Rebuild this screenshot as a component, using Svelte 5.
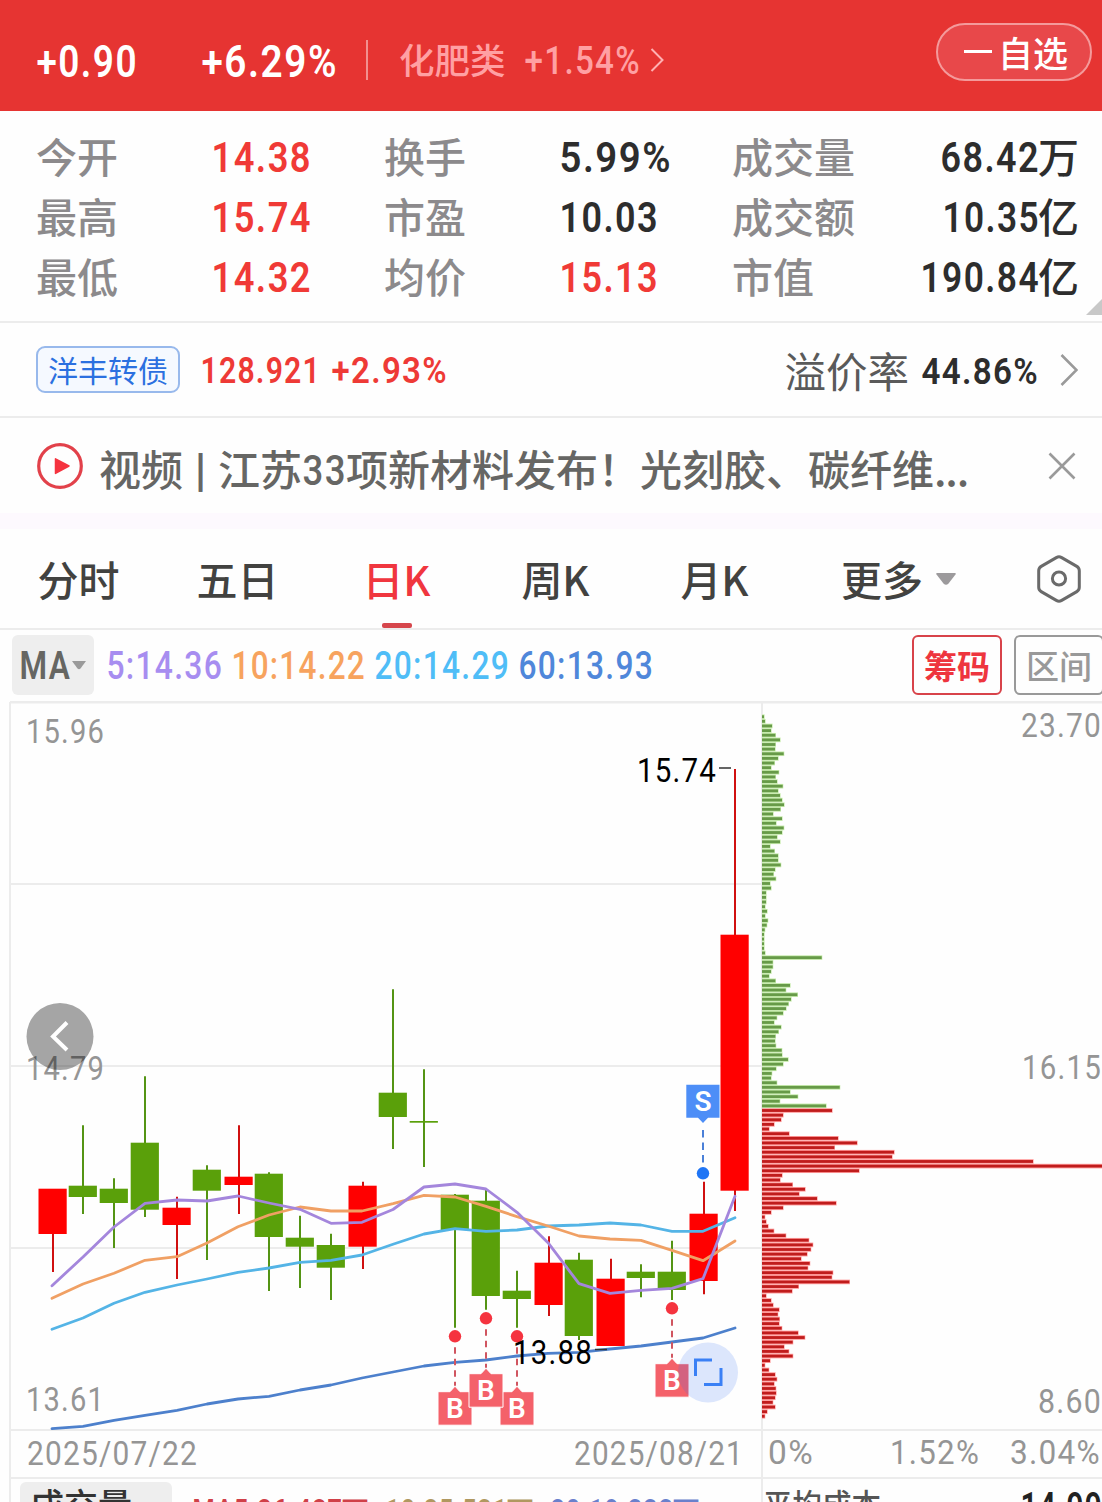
<script>
  const quotes = [
    [
      { label: '今开', value: '14.38', w: 98, up: true },
      { label: '最高', value: '15.74', w: 98, up: true },
      { label: '最低', value: '14.32', w: 98, up: true }
    ],
    [
      { label: '换手', value: '5.99%', w: 110 },
      { label: '市盈', value: '10.03', w: 97 },
      { label: '均价', value: '15.13', w: 97, up: true }
    ],
    [
      { label: '成交量', value: '68.42', w: 97, unit: '万' },
      { label: '成交额', value: '10.35', w: 95, unit: '亿' },
      { label: '市值', value: '190.84', w: 117, unit: '亿' }
    ]
  ];

  const tabs = ['分时', '五日', '日K', '周K', '月K'];
  let activeTab = $state('日K');

  const averages = [
    { text: '5:14.36', w: 114, color: '#a78df0' },
    { text: '10:14.22', w: 132, color: '#f7a35e' },
    { text: '20:14.29', w: 133, color: '#4fbdf7' },
    { text: '60:13.93', w: 133, color: '#4f87da' }
  ];

  const RED = '#ff0000';
  const GREEN = '#5aa00a';

  // wick x, high, body top, body bottom, low, rising
  const candles = [
    [53, 1189, 1188.7, 1234, 1272, 1],
    [83, 1125.3, 1185.7, 1197, 1214, 0],
    [114, 1178.3, 1188.7, 1203, 1248, 0],
    [145, 1076.3, 1142.7, 1209.7, 1217, 0],
    [177, 1196.7, 1207.7, 1225, 1279, 1],
    [207, 1165.3, 1169.7, 1190.7, 1260, 0],
    [239, 1125.3, 1176.7, 1185, 1214, 1],
    [269, 1172.3, 1173.7, 1237, 1291, 0],
    [300, 1215.7, 1237.7, 1246.7, 1288, 0],
    [331, 1233.7, 1245, 1267.7, 1300, 0],
    [363, 1181.7, 1185.7, 1246.7, 1269, 1],
    [393, 989.3, 1092.7, 1117, 1149, 0],
    [424, 1069.3, 1121, 1122.7, 1167, 0],
    [455, 1194, 1194.7, 1230, 1327.7, 0],
    [486, 1190, 1200.7, 1296, 1309.7, 0],
    [517, 1270.7, 1290.7, 1299, 1327.7, 0],
    [549, 1236.3, 1262.7, 1305, 1316, 1],
    [579, 1252.7, 1259.7, 1336, 1340, 0],
    [611, 1258.7, 1278.7, 1346, 1346, 1],
    [641, 1264.3, 1271.7, 1278, 1297.3, 0],
    [672, 1240.7, 1271.7, 1290, 1300, 0],
    [704, 1181.7, 1213.7, 1281, 1294.3, 1],
    [735, 769, 934.7, 1190.7, 1211, 1]
  ];

  const lineX = [52, 83, 114, 145, 177, 207, 238, 269, 300, 331, 362, 393, 424, 455, 486, 517, 548, 579, 610, 641, 672, 703, 735];
  const maLines = [
    { color: '#4d80cc', ys: [1428.7, 1426.3, 1420.3, 1415.3, 1410.3, 1404, 1399, 1396.3, 1390, 1385, 1378, 1372, 1366, 1362.3, 1360, 1356, 1353.3, 1352.3, 1349, 1346, 1342, 1338, 1328] },
    { color: '#54b4e6', ys: [1329.3, 1318, 1303.3, 1292.3, 1285, 1279, 1272.3, 1268, 1262.3, 1260.3, 1255, 1244.3, 1234, 1228.7, 1231.3, 1230, 1226, 1225, 1223, 1225, 1231.3, 1231.3, 1217.7] },
    { color: '#f0a064', ys: [1298.3, 1284, 1273.3, 1260.3, 1256.7, 1243, 1226.7, 1215, 1207, 1211, 1211, 1203.7, 1195.3, 1197, 1206.3, 1216.7, 1226, 1236, 1239, 1240.3, 1250.3, 1260.7, 1241] },
    { color: '#a486dc', ys: [1285.7, 1257, 1227, 1203.3, 1200, 1201, 1196, 1203, 1209.3, 1223.3, 1222.3, 1209.5, 1187, 1184, 1189, 1212.3, 1242.7, 1283.7, 1293.3, 1290.3, 1288.3, 1278.7, 1196.3] }
  ];
  const points = (ys) => ys.map((y, i) => `${lineX[i]},${y}`).join(' ');

  const buys = [
    { x: 455, dot: 1336.3, top: 1391.7 },
    { x: 517, dot: 1336.3, top: 1391.7 },
    { x: 486, dot: 1318.3, top: 1373.7 },
    { x: 672, dot: 1308.3, top: 1363.7 }
  ];

  // chip distribution, highest price first, in thirds of a pixel
  const trapped = [
    6, 9, 30, 27, 40, 54, 40, 39, 65, 48, 37, 27, 50, 40, 45, 62, 48, 54, 60, 66,
    55, 33, 60, 42, 65, 60, 45, 54, 24, 37, 48, 48, 56, 39, 34, 41, 24, 27, 12, 12,
    12, 9, 15, 9, 17, 14, 8, 6, 6, 6, 6, 9, 179, 32, 32, 27, 21, 40, 84, 71,
    106, 87, 79, 72, 63, 44, 36, 57, 49, 40, 39, 41, 59, 60, 78, 63, 42, 29, 27, 44,
    233, 84, 107, 53, 192
  ];
  const profit = [
    210, 63, 57, 36, 21, 81, 228, 285, 217, 396, 390, 813, 1020, 291, 60, 54, 91, 129, 111, 165,
    222, 63, 27, 8, 12, 18, 35, 71, 140, 152, 146, 135, 117, 143, 137, 212, 209, 262, 109, 90,
    12, 27, 33, 51, 47, 52, 51, 59, 108, 128, 92, 66, 80, 92, 24, 8, 20, 39, 44, 36,
    41, 42, 39, 32, 39, 15, 8
  ];
  const chips = [...trapped, ...profit].map((v, i) => ({
    w: v / 3,
    y: 716.7 + i * 4.633,
    up: i >= trapped.length
  }));

  const axis = [
    { t: '15.96', x: 26, y: 743, w: 79 },
    { t: '14.79', x: 26, y: 1080, w: 79 },
    { t: '13.61', x: 26, y: 1411, w: 79 },
    { t: '23.70', x: 1021, y: 737, w: 81 },
    { t: '16.15', x: 1022, y: 1079, w: 80 },
    { t: '8.60', x: 1038, y: 1413, w: 64 },
    { t: '2025/07/22', x: 27, y: 1465, w: 171 },
    { t: '2025/08/21', x: 574, y: 1465, w: 170 },
    { t: '0%', x: 768, y: 1464, w: 46 },
    { t: '1.52%', x: 890, y: 1464, w: 90 },
    { t: '3.04%', x: 1010, y: 1464, w: 91 }
  ];
</script>

{#snippet din(text, w, cap)}
  <svg class="din" width={w} height={cap} font-size={cap / 0.711}>
    <text x="-.5" y={cap} textLength={w + 2.5} lengthAdjust="spacingAndGlyphs">{text}</text>
  </svg>
{/snippet}

<div class="page">
  <header class="top">
    <span class="change">{@render din('+0.90', 99, 31)}</span>
    <span class="percent">{@render din('+6.29%', 134, 31)}</span>
    <i class="divider"></i>
    <span class="sector">化肥类</span>
    <span class="sector-pct">{@render din('+1.54%', 114, 27)}</span>
    <svg class="sector-go" width="14" height="24" viewBox="0 0 14 24">
      <path d="M1.5 1 12.5 12 1.5 23" />
    </svg>
    <button class="fav"><i></i>自选</button>
  </header>

  <section class="quotes">
    {#each quotes as column, c}
      <div class="column c{c}">
        {#each column as q}
          <div class="quote" class:up={q.up}>
            <span class="label">{q.label}</span>
            <span class="value">{@render din(q.value, q.w, 30.5)}{#if q.unit}<b>{q.unit}</b>{/if}</span>
          </div>
        {/each}
      </div>
    {/each}
    <i class="corner"></i>
  </section>

  <section class="bond">
    <span class="tag">洋丰转债</span>
    <span class="bond-price">{@render din('128.921', 118, 26.5)}</span>
    <span class="bond-pct">{@render din('+2.93%', 114, 26.5)}</span>
    <span class="premium">溢价率</span>
    <span class="premium-pct">{@render din('44.86%', 115, 26.5)}</span>
    <svg class="bond-go" width="18" height="32" viewBox="0 0 18 32">
      <path d="M1.5 1 16.5 16 1.5 31" />
    </svg>
  </section>

  <section class="news">
    <svg width="46" height="46" viewBox="0 0 46 46">
      <circle cx="23" cy="23" r="21.3" fill="none" stroke="#e2414a" stroke-width="3.2" />
      <path d="M18.5 15.8 32 23 18.5 30.4Z" fill="#f5333f" stroke="#f5333f" stroke-width="1.5" stroke-linejoin="round" />
    </svg>
    <p>视频<i class="bar">|</i>江苏{@render din('33', 42, 30.5)}项新材料发布！光刻胶、碳纤维<span class="dots">...</span></p>
    <svg class="close" width="28" height="28" viewBox="0 0 28 28">
      <path d="M1.5 1.5 26.5 26.5M26.5 1.5 1.5 26.5" />
    </svg>
  </section>

  <nav class="tabs">
    {#each tabs as tab}
      <button class="tab" class:active={tab === activeTab} onclick={() => (activeTab = tab)}>{tab}</button>
    {/each}
    <button class="tab more">
      更多
      <svg width="22" height="14" viewBox="0 0 22 14"><path d="M2 1H20Q21.5 1 20.5 2.5L13.5 11.5Q11 14 8.5 11.5L1.5 2.5Q.5 1 2 1Z" fill="#9c9a9c" /></svg>
    </button>
    <svg class="settings" width="44" height="48" viewBox="0 0 44 48">
      <path d="M19.3 2.6Q22 1 24.7 2.6L39.8 11.4Q42.3 12.9 42.3 15.8V32.2Q42.3 35.1 39.8 36.6L24.7 45.4Q22 47 19.3 45.4L4.2 36.6Q1.7 35.1 1.7 32.2V15.8Q1.7 12.9 4.2 11.4Z" />
      <circle cx="22" cy="23.5" r="6.6" />
    </svg>
  </nav>

  <section class="indicators">
    <button class="ma">
      {@render din('MA', 49, 27)}
      <svg width="14" height="9" viewBox="0 0 14 9"><path d="M0 0H14L8.5 7.5Q7 9 5.5 7.5Z" fill="#9a9a9a" /></svg>
    </button>
    {#each averages as a}
      <span class="avg" style="color: {a.color}">{@render din(a.text, a.w, 27)}</span>
    {/each}
    <button class="chip-btn on">筹码</button>
    <button class="chip-btn">区间</button>
  </section>

  <svg class="chart" width="1102" height="778" viewBox="0 701 1102 778">
    <g stroke="#ececec" stroke-width="2">
      <path d="M10 702H1102" stroke-width="3" />
      <path d="M10 884H762M10 1066H762M10 1248H762M10 1430H1102M10 1478H1102M10 702V1479" />
      <path d="M762 702V1479" />
    </g>

    {#each chips as c}
      <rect x="762" y={c.y - 2.3} width={c.w + 0.6} height="4.6" fill={c.up ? '#ff9c9c' : '#c3e9a8'} />
    {/each}
    {#each chips as c}
      <rect x="762" y={c.y - 1.4} width={c.w} height="2.8" fill={c.up ? '#c01c1c' : '#679a48'} />
    {/each}

    {#each candles as [x, high, top, bottom, low, up]}
      <path d="M{x} {high}V{low}" stroke={up ? '#d01010' : '#549414'} stroke-width="2" />
      <rect x={up ? x - 14.5 : x - 14.3} y={top} width="28.2" height={bottom - top} fill={up ? RED : GREEN} />
    {/each}

    {#each maLines as line}
      <polyline points={points(line.ys)} fill="none" stroke={line.color} stroke-width="2.8" stroke-linejoin="round" stroke-linecap="round" />
    {/each}

    {#each buys as b}
      <path d="M{b.x} {b.dot + 11}V{b.top - 6}" stroke="#d05560" stroke-width="2" stroke-dasharray="6.5 5" />
      <circle cx={b.x} cy={b.dot} r="6.2" fill="#f5333f" />
      <path
        d="M{b.x - 17} {b.top}H{b.x - 5}L{b.x} {b.top - 5.5}L{b.x + 5} {b.top}H{b.x + 17}V{b.top + 33.5}H{b.x - 17}Z"
        fill="#f4616a" stroke="#fff" stroke-width="1"
      />
      <text class="mark" x={b.x} y={b.top + 26.5} text-anchor="middle">B</text>
    {/each}

    <path d="M703 1130V1166" stroke="#4a80d8" stroke-width="2" stroke-dasharray="7.5 5" />
    <circle cx="703" cy="1173.3" r="6.2" fill="#1f75f5" />
    <path d="M686.3 1084.7H719.5V1117.7H708L703 1123 698 1117.7H686.3Z" fill="#4d8ef7" />
    <text class="mark" x="703" y="1111" text-anchor="middle">S</text>

    <g class="axis">
      {#each axis as a}
        <text x={a.x} y={a.y} textLength={a.w} lengthAdjust="spacingAndGlyphs">{a.t}</text>
      {/each}
    </g>
    <g class="extreme">
      <text x="637" y="782" textLength="80" lengthAdjust="spacingAndGlyphs">15.74</text>
      <text x="513" y="1363.5" textLength="80" lengthAdjust="spacingAndGlyphs">13.88</text>
      <path d="M719 768H731M595 1349.5H607" stroke="#333" stroke-width="1.5" />
    </g>

    <circle cx="60" cy="1036.5" r="33.5" fill="#000" fill-opacity=".35" />
    <path d="M67 1022.5 53 1036.5 67 1050" fill="none" stroke="#fff" stroke-width="4" />

    <circle cx="708" cy="1372.5" r="30" fill="#2c68f5" fill-opacity=".16" />
    <path d="M695.5 1376V1360H712M704 1384.5H721V1368" fill="none" stroke="#3a80f5" stroke-width="3" />
  </svg>

  <footer class="bottom">
    <div class="volume">
      <span class="vol-btn">成交量</span>
      <span class="vol red">{@render din('MA5:26.487', 148, 22)}万</span>
      <span class="vol tan">{@render din('10:25.531', 120, 22)}万</span>
      <span class="vol blue">{@render din('20:19.333', 121, 22)}万</span>
    </div>
    <div class="cost">
      <span>平均成本</span>
      {@render din('14.99', 80, 27)}
    </div>
  </footer>
</div>

<style>
  :global(body) {
    background: #fff;
    overflow: hidden;
  }

  .page {
    width: 1102px;
    height: 1502px;
    overflow: hidden;
    background: #fefefe;
    font-family: "Noto Sans CJK SC", "Noto Sans", sans-serif;
    font-weight: 500;
    color: #2d2d2d;
  }

  button {
    font: inherit;
    color: inherit;
    background: none;
    border: 0;
    padding: 0;
  }

  svg {
    display: block;
    flex: none;
  }

  .din {
    overflow: visible;
    fill: currentColor;
    font-family: Roboto, sans-serif;
    font-weight: 600;
    letter-spacing: .04em;
  }

  .top {
    box-sizing: border-box;
    height: 111px;
    background: #e63432;
    color: #fff;
    display: flex;
    align-items: center;
    padding: 12px 10px 0 37px;
  }
  .percent { margin-left: 66px; }
  .divider {
    width: 2px;
    height: 40px;
    margin: -4px 31px 0 30px;
    background: #f2908f;
  }
  .sector {
    font-size: 35.5px;
    line-height: 40px;
    margin-top: -5px;
    color: #ffa0a3;
    width: 126px;
  }
  .sector-pct {
    color: #ffa0a3;
    margin-top: -3px;
  }
  .sector-pct .din { font-weight: 500; }
  .sector-go {
    margin: -3px 0 0 11px;
    fill: none;
    stroke: #ffb0b2;
    stroke-width: 2;
  }
  .fav {
    box-sizing: border-box;
    width: 156px;
    height: 58px;
    margin: -20px 0 0 auto;
    border: 2px solid #f49a9b;
    border-radius: 29px;
    background: #e8484a;
    display: flex;
    align-items: center;
    font-size: 35px;
    line-height: 50px;
    padding-left: 26px;
  }
  .fav i {
    width: 28px;
    height: 3px;
    margin-right: 6px;
    background: #fff;
  }

  .quotes {
    position: relative;
    height: 212px;
    box-sizing: border-box;
    padding: 15px 23px 0 36px;
    display: flex;
    border-bottom: 2px solid #ececec;
  }
  .column.c0, .column.c1 { width: 348px; }
  .column.c2 { flex: 1; }
  .quote {
    height: 60px;
    display: flex;
    align-items: center;
  }
  .label {
    font-size: 41px;
    line-height: 60px;
    margin-top: -2px;
    color: #8c8a8c;
    width: 176px;
    white-space: nowrap;
  }
  .c2 .label { width: auto; }
  .value {
    display: flex;
    align-items: center;
  }
  .value b {
    font-size: 41px;
    font-weight: 500;
    line-height: 60px;
    margin-top: -2px;
  }
  .c2 .value { margin-left: auto; }
  .up .value { color: #f03a36; }
  .corner {
    position: absolute;
    right: 0;
    bottom: 6px;
    border-left: 16px solid transparent;
    border-bottom: 16px solid #c8c8c8;
  }

  .bond {
    box-sizing: border-box;
    height: 95px;
    border-bottom: 2px solid #ececec;
    display: flex;
    align-items: center;
    padding: 0 24px 0 36px;
  }
  .tag {
    box-sizing: border-box;
    width: 144px;
    height: 47px;
    margin-top: -1px;
    border: 2px solid #98b9ec;
    border-radius: 9px;
    background: #f5f9ff;
    color: #2b70e0;
    font-size: 30px;
    font-weight: 400;
    line-height: 43px;
    text-align: center;
    white-space: nowrap;
  }
  .bond-price { margin-left: 21px; color: #ee3a36; }
  .bond-pct { margin-left: 13px; color: #ee3a36; }
  .premium {
    margin-left: auto;
    font-size: 41.5px;
    font-weight: 400;
    color: #5a5a5a;
  }
  .premium-pct { margin: 1px 23px 0 13px; }
  .bond-go, .close {
    fill: none;
    stroke: #9a9a9a;
    stroke-width: 2.6;
  }

  .news {
    height: 95px;
    display: flex;
    align-items: center;
    padding: 0 26px 0 37px;
    border-bottom: 16px solid #fdf9fe;
  }
  .news p {
    margin: 4px 0 0 16px;
    display: flex;
    align-items: center;
    font-size: 42px;
    line-height: 60px;
    color: #666664;
    white-space: nowrap;
  }
  .bar {
    width: 35px;
    font-style: normal;
    font-size: 34px;
    font-weight: 900;
    text-align: center;
  }
  .dots { letter-spacing: -1.2px; }
  .news .din { margin: 3px 1px 0; font-weight: 500; }
  .close { margin-left: auto; }

  .tabs {
    box-sizing: border-box;
    height: 101px;
    border-bottom: 2px solid #ececec;
    display: flex;
    align-items: center;
    padding: 0 21px 0 0;
  }
  .tab {
    width: 159px;
    height: 99px;
    position: relative;
    left: -1px;
    font-size: 41px;
    line-height: 99px;
    color: #424240;
    text-align: center;
    white-space: nowrap;
  }
  .tab.active { color: #f0363f; }
  .tab.active::after {
    content: '';
    position: absolute;
    left: 65px;
    bottom: 0;
    width: 30px;
    height: 5px;
    border-radius: 2px;
    background: #d6464c;
  }
  .tab.more {
    width: auto;
    display: flex;
    align-items: center;
    gap: 12px;
    margin-left: 47px;
  }
  .settings {
    margin-left: auto;
    fill: none;
    stroke: #6a6a6a;
    stroke-width: 3;
  }

  .indicators {
    height: 71px;
    display: flex;
    align-items: center;
    padding-left: 12px;
  }
  .indicators .din { font-weight: 500; }
  .ma {
    box-sizing: border-box;
    width: 82px;
    height: 60px;
    margin: -1px 13px 0 0;
    border-radius: 6px;
    background: #eeeeee;
    color: #666662;
    display: flex;
    align-items: center;
    gap: 3px;
    padding-left: 8px;
  }
  .ma .din { font-weight: 600; }
  .avg { margin-right: 11px; }
  .chip-btn {
    box-sizing: border-box;
    flex: none;
    width: 90px;
    height: 60px;
    border: 2px solid #999;
    border-radius: 6px;
    color: #999;
    font-size: 33px;
    line-height: 54px;
    margin: -1px -2px 0 12px;
  }
  .chip-btn.on {
    border-color: #d8434a;
    color: #ee353e;
    font-weight: 700;
    margin: -1px 0 0 auto;
  }

  .axis, .extreme {
    font-family: Roboto, sans-serif;
    font-size: 32.5px;
    font-weight: 400;
    letter-spacing: .04em;
    fill: #959595;
  }
  .extreme {
    fill: #000;
  }
  .mark {
    font-family: Roboto, sans-serif;
    font-size: 28px;
    font-weight: 600;
    fill: #fff;
  }

  .bottom {
    height: 60px;
    display: flex;
  }
  .volume {
    box-sizing: border-box;
    width: 754px;
    margin-left: 9px;
    padding: 3px 0 0 9px;
    border-left: 2px solid #ececec;
    border-right: 2px solid #ececec;
    display: flex;
  }
  .vol-btn {
    width: 142px;
    height: 60px;
    padding-left: 10px;
    margin-right: 21px;
    border-radius: 6px;
    background: #eeeeee;
    color: #333;
    font-size: 34px;
    line-height: 44px;
  }
  .vol {
    height: 40px;
    padding-top: 8px;
    display: flex;
    align-items: center;
    font-size: 28px;
    margin-right: 17px;
  }
  .red { color: #d04048; }
  .tan { color: #b09860; }
  .blue { color: #6a80cc; }
  .cost {
    flex: 1;
    display: flex;
    justify-content: space-between;
    padding-left: 0;
    font-size: 29.5px;
    line-height: 46px;
    color: #555;
  }
  .cost .din {
    color: #222;
    margin: 14px 1px 0 0;
  }
</style>
